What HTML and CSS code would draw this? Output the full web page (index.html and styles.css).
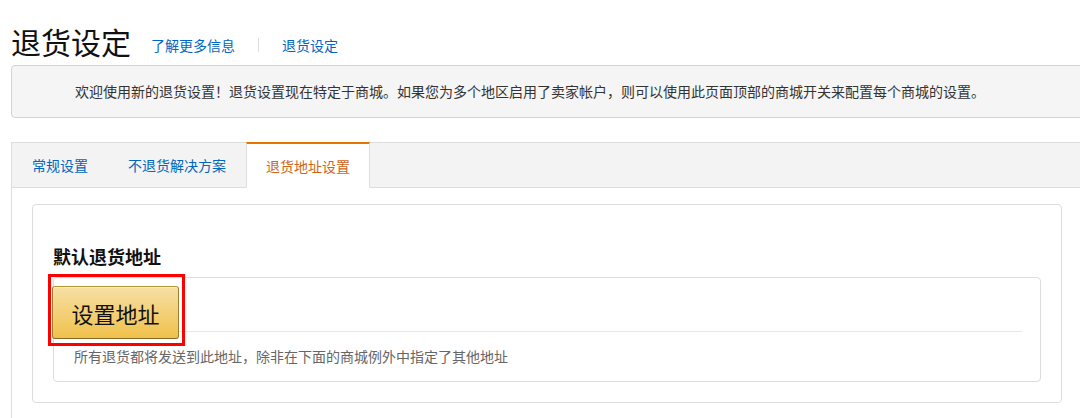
FILE: index.html
```html
<!DOCTYPE html>
<html lang="zh-CN">

<head>
  <meta charset="UTF-8">
  <meta name="viewport" content="width=device-width, initial-scale=1.0">
  <title>退货设定</title>

  <link rel="stylesheet" href="styles.css">
</head>

<body>
  <div class="page">
    <header class="head">
      <h1>退货设定</h1>
      <a href="#" class="head-link">了解更多信息</a>
      <span class="head-sep"></span>
      <a href="#" class="head-link">退货设定</a>
    </header>

    <div class="notice">
      欢迎使用新的退货设置！退货设置现在特定于商城。如果您为多个地区启用了卖家帐户，则可以使用此页面顶部的商城开关来配置每个商城的设置。
    </div>

    <nav class="tabs">
      <a href="#" class="tab">常规设置</a>
      <a href="#" class="tab">不退货解决方案</a>
      <a href="#" class="tab active">退货地址设置</a>
    </nav>

    <section class="panel">
      <div class="box">
        <h2>默认退货地址</h2>
        <div class="address">
          <div class="address-row">
            <button type="button" class="btn-gold">设置地址</button>
          </div>
          <p class="hint">所有退货都将发送到此地址，除非在下面的商城例外中指定了其他地址</p>
        </div>
      </div>
    </section>
  </div>
</body>

</html>
```

FILE: styles.css
```css
body {
  margin: 0;
  background-color: #fff;
  overflow: hidden;
  font-family: "Noto Sans CJK SC", "Liberation Sans", sans-serif;
  color: #111;
}

.page {
  width: 1100px;
  padding-left: 11px;
}

.head {
  display: flex;
  align-items: center;
  padding-top: 20px;
  height: 42px;
}

.head h1 {
  margin: 0 20px 0 0;
  font-size: 30px;
  font-weight: 400;
  line-height: 42px;
  color: #111;
}

.head-link {
  margin-top: 8px;
  font-size: 14px;
  line-height: 20px;
  color: #0066c0;
  text-decoration: none;
}

.head-sep {
  display: inline-block;
  width: 1px;
  height: 14px;
  margin: 8px 23px 0 23px;
  background-color: #ddd;
}

.notice {
  margin-top: 3px;
  height: 51px;
  line-height: 51px;
  padding-left: 63px;
  border: 1px solid #c9d6df;
  border-radius: 4px;
  background-color: #f5f5f5;
  font-size: 14px;
  color: #333;
}

.tabs {
  display: flex;
  margin-top: 24px;
  height: 44px;
  border: 1px solid #ddd;
  background-color: #f3f3f3;
}

.tab {
  padding: 0 20px;
  line-height: 44px;
  font-size: 14px;
  color: #0066c0;
  text-decoration: none;
}

.tab.active {
  margin: -1px 0 -1px 0;
  padding: 0 19px;
  line-height: 44px;
  border: 1px solid #ddd;
  border-top: 2px solid #e77600;
  border-bottom: 1px solid #fff;
  background-color: #fff;
  color: #d0651a;
}

.panel {
  border-left: 1px solid #ddd;
  padding: 16px 0 0 20px;
  height: 214px;
}

.box {
  width: 988px;
  padding: 39px 20px 20px 20px;
  border: 1px solid #ddd;
  border-radius: 4px;
}

.box h2 {
  margin: 0 0 8px 0;
  font-size: 18px;
  line-height: 25px;
  font-weight: 700;
  color: #111;
}

.address {
  border: 1px solid #ddd;
  border-radius: 4px;
}

.address-row {
  display: flex;
  align-items: flex-start;
  margin-right: 18px;
  padding-top: 8px;
  border-bottom: 1px solid #e7e7e7;
}

.btn-gold {
  position: relative;
  margin: 0 0 -8px -2px;
  width: 127px;
  height: 53px;
  padding: 0;
  border: 1px solid;
  border-color: #b79336 #9c7e31 #846a29;
  border-radius: 3px;
  background: linear-gradient(to bottom, #f7dfa5, #f0c14b);
  box-shadow: inset 0 1px 0 rgba(255, 255, 255, 0.5);
  font-family: inherit;
  font-size: 22px;
  color: #111;
}

/* red highlight frame drawn over the button */
.btn-gold::after {
  content: "";
  position: absolute;
  top: -13px;
  left: -5px;
  right: -7px;
  bottom: -8px;
  border: 3px solid #f00;
}

.hint {
  margin: 14px 0 0 0;
  padding: 0 0 15px 20px;
  font-size: 14px;
  line-height: 20px;
  color: #666;
}
```
